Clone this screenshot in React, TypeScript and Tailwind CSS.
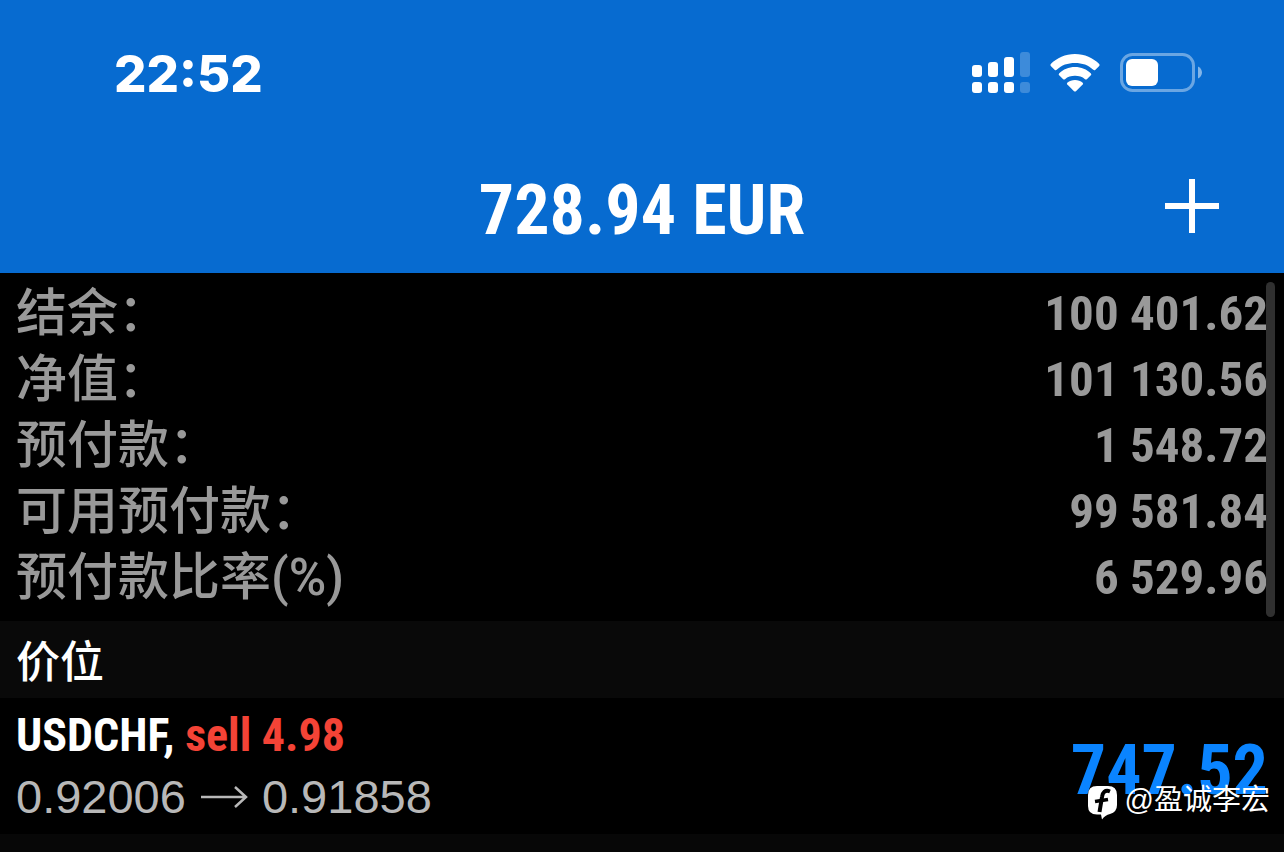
interface SummaryRow {
  label: string
  value: string
}

const summary: SummaryRow[] = [
  { label: '结余：', value: '100 401.62' },
  { label: '净值：', value: '101 130.56' },
  { label: '预付款：', value: '1 548.72' },
  { label: '可用预付款：', value: '99 581.84' },
  { label: '预付款比率(%)', value: '6 529.96' },
]

function SignalIcon() {
  return (
    <svg width="58" height="42" viewBox="0 0 58 42" fill="#fff" aria-hidden="true">
      <rect x="0" y="13" width="10" height="12" rx="3" />
      <rect x="16" y="10" width="10" height="15" rx="3" />
      <rect x="32" y="5" width="10" height="20" rx="3" />
      <rect x="48" y="0" width="10" height="25" rx="3" opacity="0.22" />
      <rect x="0" y="30" width="10" height="11" rx="3" />
      <rect x="16" y="30" width="10" height="11" rx="3" />
      <rect x="32" y="30" width="10" height="11" rx="3" />
      <rect x="48" y="30" width="10" height="11" rx="3" opacity="0.22" />
    </svg>
  )
}

function WifiIcon() {
  return (
    <svg width="50" height="38" viewBox="0 0 52 38" preserveAspectRatio="none" fill="#fff" aria-hidden="true">
      <path d="M26 0C36 0 45 4 51.200 10Q52 11 51.200 12L47 16Q46 16.600 45 15.800C40 11 33.500 9 26 9S12 11 7 15.800Q6 16.600 5 16L.8 12Q0 11 .8 10C7 4 16 0 26 0Z" />
      <path d="M26 13C32.500 13 38.200 15.400 42.600 19.400Q43.400 20.300 42.500 21.200L38.300 25.200Q37.400 26 36.400 25.200C33.600 22.800 30 21.800 26 21.800S18.400 22.800 15.600 25.200Q14.600 26 13.700 25.200L9.500 21.200Q8.600 20.300 9.400 19.400C13.800 15.400 19.500 13 26 13Z" />
      <path d="M26 26C29 26 31.800 27 34 28.700Q34.900 29.600 34 30.500L27 37.200Q26 38 25 37.200L18 30.500Q17.100 29.600 18 28.700C20.200 27 23 26 26 26Z" />
    </svg>
  )
}

function BatteryIcon() {
  return (
    <svg width="82" height="40" viewBox="0 0 82 40" aria-hidden="true">
      <rect x="1.500" y="1.500" width="72" height="36" rx="11" fill="none" stroke="#fff" strokeOpacity="0.4" strokeWidth="3" />
      <rect x="6" y="6" width="32" height="27" rx="6" fill="#fff" />
      <path d="M78 13.500C80.500 14.500 82 17 82 19.500S80.500 24.500 78 25.500Z" fill="#fff" opacity="0.5" />
    </svg>
  )
}

function StatusBar() {
  return (
    <div className="flex h-[146px] items-center justify-between pl-[114px] pr-[82px]">
      <time className="font-['Inter',sans-serif] text-[51px] font-extrabold leading-none">22:52</time>
      <div className="flex items-center gap-5">
        <SignalIcon />
        <WifiIcon />
        <BatteryIcon />
      </div>
    </div>
  )
}

function NavBar() {
  return (
    <div className="grid h-[127px] grid-cols-[1fr_auto_1fr] items-center px-16">
      <h1 className="col-start-2 font-['Roboto_Condensed','Liberation_Sans',sans-serif] text-[70px] font-bold leading-[124px]">
        728.94 EUR
      </h1>
      <button type="button" aria-label="新订单" className="justify-self-end pb-2">
        <svg width="56" height="56" viewBox="0 0 56 56" stroke="#fff" strokeWidth="6" aria-hidden="true">
          <path d="M28 1V55M1 28H55" />
        </svg>
      </button>
    </div>
  )
}

function AccountSummary() {
  return (
    <section className="relative px-4 pb-[10px] pt-2">
      <dl>
        {summary.map((row) => (
          <div key={row.label} className="flex h-[66px] items-center justify-between text-[#999]">
            <dt className="font-['Roboto','Noto_Sans_CJK_SC',sans-serif] text-[51px] font-medium leading-[66px]">
              {row.label}
            </dt>
            <dd className="font-['Roboto_Condensed','Liberation_Sans',sans-serif] text-[49px] font-bold leading-[66px]">
              {row.value}
            </dd>
          </div>
        ))}
      </dl>
      <div className="absolute bottom-1 right-[9px] top-[9px] w-[9px] rounded-full bg-[#303030]" />
    </section>
  )
}

function Watermark() {
  return (
    <div className="absolute bottom-[14px] right-[14px] flex items-start gap-2 text-white">
      <svg width="29" height="34" viewBox="0 0 29 34" aria-hidden="true">
        <path d="M9 0H20Q29 0 29 9V19Q29 26 22 28Q17 29 14 33.500L13 28.500H9Q0 28.500 0 20V9Q0 0 9 0Z" fill="#fff" />
        <path
          d="M22 5.500C17 3.500 14.600 6.500 14 11L11.500 26"
          fill="none"
          stroke="#000"
          strokeWidth="4"
        />
        <path d="M7 15.500L20 13.500" fill="none" stroke="#000" strokeWidth="3.500" />
      </svg>
      <span className="font-['Liberation_Sans','Noto_Sans_CJK_SC',sans-serif] text-[29px] font-normal leading-7">
        @盈诚李宏
      </span>
    </div>
  )
}

function Position() {
  return (
    <article className="relative flex h-[136px] items-center justify-between px-4">
      <div>
        <h3 className="font-['Roboto_Condensed','Liberation_Sans',sans-serif] text-[46px] font-bold leading-[62px]">
          USDCHF, <span className="text-[#f44336]">sell 4.98</span>
        </h3>
        <p className="flex items-center gap-[14px] font-['Liberation_Sans',sans-serif] text-[47px] leading-[62px] text-[#b8b8b8]">
          0.92006
          <svg width="48" height="22" viewBox="0 0 48 22" fill="none" stroke="currentColor" strokeWidth="2.500" aria-label="→">
            <path d="M1 11H46M35 1L46 11L35 21" />
          </svg>
          0.91858
        </p>
      </div>
      <strong className="pt-2 font-['Roboto_Condensed','Liberation_Sans',sans-serif] text-[70px] font-bold leading-none text-[#0a84ff]">
        747.52
      </strong>
      <Watermark />
    </article>
  )
}

export default function App() {
  return (
    <main className="min-h-screen bg-black font-['Noto_Sans_CJK_SC',sans-serif] text-white" lang="zh-CN">
      <header className="bg-[#076bd0]">
        <StatusBar />
        <NavBar />
      </header>
      <AccountSummary />
      <h2 className="bg-[#090909] px-4 text-[44px] font-medium leading-[77px]">价位</h2>
      <Position />
      <div className="h-[18px] bg-[#070707]" />
    </main>
  )
}
